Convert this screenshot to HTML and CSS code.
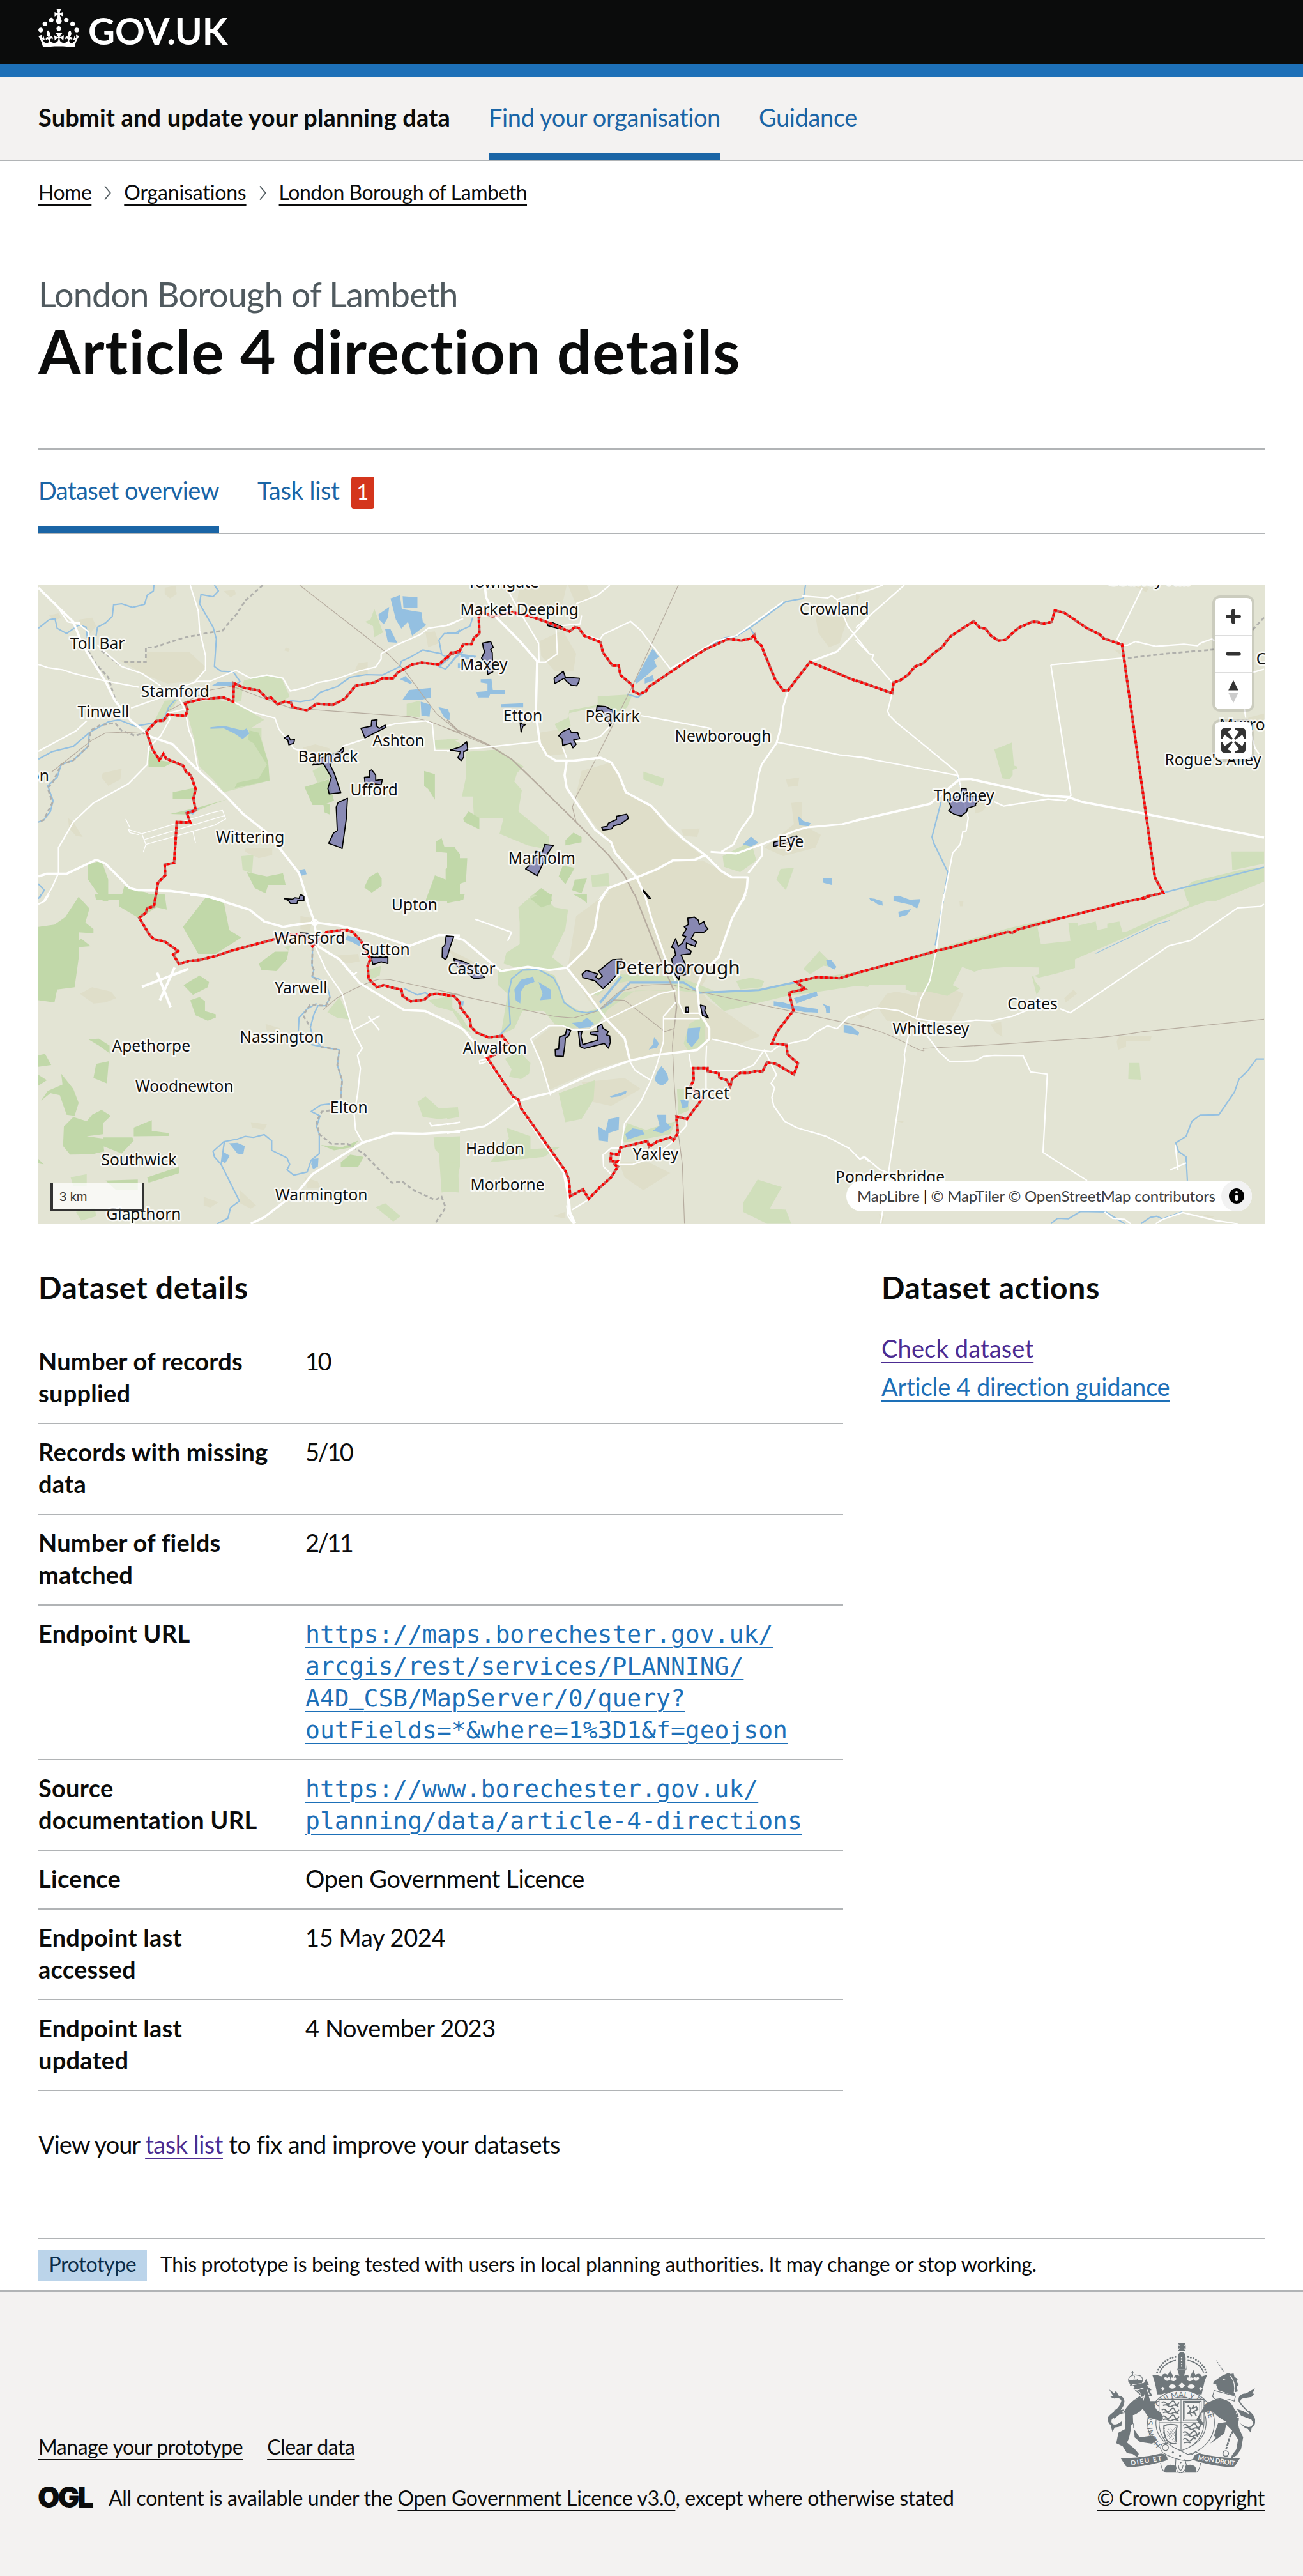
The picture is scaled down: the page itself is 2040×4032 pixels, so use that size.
FILE: index.html
```html
<!DOCTYPE html>
<html lang="en">
<head>
<meta charset="utf-8">
<title>Article 4 direction details</title>
<link rel="stylesheet" href="styles.css">
</head>
<body>
<header class="header">
  <a class="logo" href="#">
    <svg class="logo-crown" viewBox="0 0 32 30" aria-hidden="true"><path fill="currentColor" d="M22.6 10.4c-1 .4-2-.1-2.4-1-.4-.9.1-2 1-2.4.9-.4 2 .1 2.4 1s-.1 2-1 2.4m-5.9 6.7c-.9.4-2-.1-2.4-1-.4-.9.1-2 1-2.4.9-.4 2 .1 2.4 1s-.1 2-1 2.4m10.8-3.7c-1 .4-2-.1-2.4-1-.4-.9.1-2 1-2.4.9-.4 2 .1 2.4 1s0 2-1 2.4m3.3 4.8c-1 .4-2-.1-2.4-1-.4-.9.1-2 1-2.4.9-.4 2 .1 2.4 1s-.1 2-1 2.4M17 4.7l2.3 1.2V2.5l-2.3.7-.2-.2.9-3h-3.4l.9 3-.2.2c-.1.1-2.3-.7-2.3-.7v3.4L15 4.7c.1.1.1.2.2.2l-1.3 4c-.1.2-.1.4-.1.6 0 1.1.8 2 1.9 2.2h.7c1-.2 1.9-1.1 1.9-2.1 0-.2 0-.4-.1-.6l-1.3-4c-.1-.2 0-.2.1-.3m-7.6 5.7c.9.4 2-.1 2.4-1 .4-.9-.1-2-1-2.4-.9-.4-2 .1-2.4 1s0 2 1 2.4m-5 3c.9.4 2-.1 2.4-1 .4-.9-.1-2-1-2.4-.9-.4-2 .1-2.4 1s.1 2 1 2.4m-3.2 4.8c.9.4 2-.1 2.4-1 .4-.9-.1-2-1-2.4-.9-.4-2 .1-2.4 1s0 2 1 2.4m14.8 11c4.4 0 8.6.3 12.3.8 1.1-4.5 2.4-7 3.7-8.8l-2.5-.9c.2 1.3.3 1.9 0 2.7-.4-.4-.8-1.1-1.1-2.3l-1.2 4c.7-.5 1.3-.8 2-.9-1.1 2.5-2.6 3.1-3.5 3-1.1-.2-1.7-1.2-1.5-2.1.3-1.2 1.5-1.5 2.1-.1 1.1-2.3-.8-3-2-2.3 1.9-1.9 2.1-3.5.6-5.6-2.1 1.6-2.1 3.2-1.2 5.5-1.2-1.4-3.2-.6-2.5 1.6.9-1.4 2.1-.5 1.9.8-.2 1.1-1.7 2.1-3.5 1.9-2.7-.2-2.9-2.1-2.9-3.6.7-.1 1.9.5 2.9 1.9l.4-4.3c-1.1 1.1-2.1 1.4-3.2 1.4.4-1.2 2.1-3 2.1-3h-5.4s1.7 1.9 2.1 3c-1.1 0-2.1-.2-3.2-1.4l.4 4.3c1-1.4 2.2-2 2.9-1.9-.1 1.5-.2 3.4-2.9 3.6-1.9.2-3.4-.8-3.5-1.9-.2-1.3 1-2.2 1.9-.8.7-2.3-1.2-3-2.5-1.6.9-2.2.9-3.9-1.2-5.5-1.5 2-1.3 3.7.6 5.6-1.2-.7-3.1 0-2 2.3.6-1.4 1.8-1.1 2.1.1.2.9-.3 1.9-1.5 2.1-.9.2-2.4-.5-3.5-3 .6 0 1.2.3 2 .9l-1.2-4c-.3 1.1-.7 1.9-1.1 2.3-.3-.8-.2-1.4 0-2.7l-2.9.9C1.3 23 2.6 25.5 3.7 30c3.7-.5 7.9-.8 12.3-.8"/></svg>
    <span class="logo-text">GOV.UK</span>
  </a>
</header>
<nav class="service-nav">
  <span class="service-name">Submit and update your planning data</span>
  <a class="service-link is-active" href="#">Find your organisation</a>
  <a class="service-link" href="#">Guidance</a>
</nav>
<div class="container">
  <nav class="breadcrumbs">
    <a href="#">Home</a>
    <svg class="chevron" viewBox="0 0 11 22"><path d="M1 .5 9.7 11 1 21.5"/></svg>
    <a class="crumb-wide" href="#">Organisations</a>
    <svg class="chevron" viewBox="0 0 11 22"><path d="M1 .5 9.7 11 1 21.5"/></svg>
    <a href="#">London Borough of Lambeth</a>
  </nav>
  <main>
    <span class="caption">London Borough of Lambeth</span>
    <h1 class="title">Article 4 direction details</h1>
    <nav class="tabs">
      <a class="tab is-active" href="#">Dataset overview</a>
      <a class="tab" href="#"><span>Task list</span><span class="badge">1</span></a>
    </nav>

    <div class="map">
      <svg class="map-canvas" viewBox="0 0 1920 1000">
        <!-- north west -->
        <g transform="translate(0 -6) scale(.42092 .33333)">
          <path class="urban" d="M300 370 400 375 405 330 560 330 620 400 600 450 560 470 480 480 400 440zM150 180 200 170 215 210 190 250 165 220zM40 160 75 150 85 170 60 185zM470 30 510 20 515 60 490 80 470 60zM1180 410 1190 385 1225 378 1225 440 1170 440zM1440 240 1475 235 1490 290 1450 310zM920 310 935 318 930 330 915 325zM985 780 1030 765 1085 785 1080 800 990 800zM240 900 310 880 305 930 260 960 235 920zM110 1110 130 1130 165 1200 140 1195 115 1160zM770 1255 870 1250 870 1285 820 1300 770 1270zM690 45 730 40 735 60 715 75z"/>
          <path class="park" d="M555 625 550 575 660 555 725 570 800 620 840 650 790 690 830 690 830 740 855 850 860 935 690 990 650 930 600 870 580 740zM765 465 850 440 905 455 935 540 900 570 850 540 820 510 760 490zM730 490 760 500 755 560 730 570zM1250 130 1282 240 1250 262 1245 210 1215 190 1235 180zM1370 575 1420 560 1420 640 1370 630zM470 560 520 555 490 610 480 650 430 660zM1475 745 1540 740 1568 760 1568 785 1475 785zM755 1290 800 1285 795 1370 760 1355zM1020 890 1060 860 1090 920 1040 950z"/>
          <path class="wood" d="M820 710 855 850 860 935 730 970 740 945 820 925 850 860 800 760 780 745 785 700zM500 990 580 970 580 1020 500 1020zM490 1092 600 1060 705 1022 640 1050 560 1095zM410 790 450 840 500 850 470 870 410 870zM990 965 1080 930 1100 1030 1060 1050 1020 1050zM1060 1045 1085 1045 1085 1095 1065 1085zM1435 890 1475 905 1475 1025 1450 975 1435 960zM775 1365 850 1385 910 1370 920 1425 855 1425 845 1465 805 1440zM1230 1390 1262 1365 1277 1395 1277 1430 1240 1462 1212 1437zM1480 1220 1500 1205 1510 1245 1545 1245 1568 1280 1568 1500 1440 1500 1475 1380 1515 1400 1515 1350 1530 1340 1525 1275 1480 1270zM185 1330 235 1310 260 1400 260 1500 240 1500 185 1400zM320 1430 400 1460 460 1500 305 1500z"/>
          <path class="water" d="M1310 80 1345 65 1352 130 1400 140 1425 145 1430 190 1443 205 1390 255 1375 190 1350 222 1330 180zM1355 70 1410 75 1410 125 1358 125zM1265 155 1305 120 1300 170 1285 202 1268 180zM1290 225 1310 225 1335 288 1300 285zM1345 460 1365 445 1390 475 1385 482zM1380 510 1460 500 1460 545 1430 555 1355 555zM1422 565 1460 580 1455 635 1425 630zM1488 590 1525 600 1530 650 1510 640zM640 685 690 678 760 700 775 690 785 715 760 740 730 715 690 690 640 692zM645 490 670 472 725 475 740 490zM545 1080 600 1062 575 1095zM970 1355 992 1350 998 1375 978 1382z"/>
          <path class="river" d="M0 220 40 180 62 175 70 220 105 245 150 205 178 215 182 265M430 18 428 45 405 65 395 108 350 122 310 105 280 110 275 165 250 195 220 215 215 255M655 18 670 45 650 72 605 62 600 105 620 150 650 215 662 270 655 400 680 422 725 425 750 470 735 485M1568 228 1550 245 1510 245 1490 275 1500 340 1430 322 1385 355 1350 375 1345 400 1280 440 1220 438 1160 450 1110 495 1050 520 1020 555 975 565 935 560M1500 345 1530 360 1490 400 1515 412 1568 330M0 835 50 800 130 775 190 710 260 660 300 650 360 680 430 665 470 640 485 590 510 555M190 710 185 775 130 840 85 860 70 920 35 960 55 1030 45 1080 20 1120 0 1130M0 1420 22 1450 5 1485"/>
          <path class="boundary" d="M835 18 770 90 740 150 715 185 685 232 630 242 540 265 430 310 400 310 400 378 310 378M235 325 305 395M185 325 215 390 260 450 290 570 330 640 400 710 360 725 310 700 285 665 230 675 195 700 185 775 130 840 85 860 55 940 35 970 52 1040 20 1120 0 1130"/>
          <path class="rail" d="M972 18 1300 340 1360 415 1480 620 1568 712M50 895 200 745 250 712 320 708 400 715M480 610 540 570 640 510 720 492 850 555 940 595 1050 605 1380 635 1460 660 1568 712"/>
          <path class="road" d="M0 390 35 405 90 415 130 432 240 465 375 497M220 300 310 400 385 432 455 490M0 798 140 702 180 655M565 18 595 140 600 230 622 350 622 415 580 475M545 490 590 470 640 468 735 418 790 455 850 440 910 455 937 515 990 500 1040 475 1105 460 1195 420 1255 402 1275 365 1275 340 1330 300 1420 250 1450 220 1530 205 1568 180M60 100 110 190 150 200 185 235 190 300M120 190 155 195M345 595 480 535 520 540 545 600 480 620 490 645 455 725 410 780 405 860 335 950 205 1040 130 1130 75 1250 75 1370 50 1440 20 1500M545 600 560 700 575 745 590 860 600 900M725 565 800 615 880 642 895 695 935 755 950 785 985 800M1130 775 1215 740 1230 700 1330 668 1440 655 1465 668 1475 795 1568 795"/>
          <path class="road-main" d="M0 30 65 110 130 190 165 300 250 470 285 560 345 655 420 730 500 765 580 870 700 1010 760 1090 850 1180 905 1265 970 1370 1002 1500M0 1385 30 1373 105 1373 215 1307 250 1325 340 1440 370 1450 490 1453 620 1475 695 1500"/>
          <path class="runway" d="M335 1165 385 1185 650 1085 685 1075 697 1115 655 1145 400 1235 385 1185M395 1212 692 1100M335 1165 340 1180 375 1190M325 1115 340 1155M575 1175 585 1230M390 1272 400 1235"/>
        </g>
        <!-- north centre -->
        <g transform="translate(640 -6) scale(.42092 .33333)">
          <path class="urban" d="M270 18 445 18 430 100 400 170 300 160 260 100zM345 280 430 230 480 340 470 420 400 420 350 350zM345 710 440 690 440 810 370 820 345 780zM480 1000 500 890 610 850 670 990 760 1060 830 1170 950 1290 870 1310 720 1390 640 1290 560 1160 500 1060zM600 1440 870 1310 950 1310 1050 1380 1120 1400 1100 1500 600 1500zM1260 930 1310 920 1305 960 1268 965zM1280 1040 1320 1035 1320 1140 1390 1190 1370 1250 1250 1290 1180 1250 1290 1140zM1370 160 1490 170 1460 290 1420 310 1380 240zM450 18 520 18 540 80 480 110zM870 1165 940 1160 930 1200 880 1195z"/>
          <path class="park" d="M70 800 190 790 285 870 260 900 250 940 278 980 265 1080 380 1200 380 1260 300 1240 195 1185 210 1110 100 1110 95 1010 55 1010 70 920zM560 540 690 530 670 590 640 620 590 580 450 620 460 680 415 705 400 670 450 640 455 605 560 580zM730 893 808 925 800 965 730 930zM0 740 45 740 0 765zM1025 1290 1130 1220 1150 1310 1090 1365 1030 1340zM1225 1400 1240 1350 1290 1345 1260 1450zM535 1380 600 1370 605 1430 540 1435z"/>
          <path class="wood" d="M0 1245 30 1245 30 1300 75 1300 70 1410 0 1440zM440 1215 470 1180 500 1200 500 1225 440 1240zM60 1115 80 1080 120 1110 120 1165 65 1130zM415 1385 430 1335 475 1345 440 1422zM475 1400 520 1395 500 1465 465 1450zM310 1480 350 1440 385 1470 390 1500 310 1500z"/>
          <path class="water" d="M765 315 788 355 770 370 780 400 740 445 705 480 698 470 735 380zM735 455 765 440 770 465 735 480zM125 460 165 458 170 510 215 510 215 528 160 530 155 545 115 545 108 520 150 515 150 480 125 475zM50 340 110 350 95 365 50 362zM200 577 283 572 283 592 200 592zM0 600 10 620 8 650 0 650zM1100 1235 1130 1198 1158 1228 1130 1245zM1305 1100 1325 1125 1352 1135 1345 1150 1310 1145zM1397 1395 1432 1395 1430 1425 1400 1415zM40 385 60 385 60 405 40 405z"/>
          <path class="river" d="M0 240 40 245 50 230 85 210 95 170M1333 18 1325 80 1260 95 1130 215 1075 258 1030 265 890 375M1125 215 1142 250M0 405 30 360 60 330M670 530 710 545 740 515"/>
          <path class="rail" d="M860 18 690 490 555 830 480 1010 466 1060 480 1130M0 690 160 775"/>
          <path class="rail-main" d="M0 650 40 700 150 765 240 835 310 920 480 1130 600 1285 660 1380 708 1500"/>
          <path class="road" d="M605 18 560 65 480 105M230 50 260 120 340 290 342 380 365 380 410 340 405 210 495 200 500 160M570 270 580 250 682 188 720 230 830 410 890 375M0 205 60 175M720 630 830 655 980 690M1225 755 1350 785 1460 815 1568 830M0 797 150 778 340 752M445 830 430 780M430 755 515 750 570 728 605 680M510 250 570 275M1320 68 1415 78 1430 68 1450 85 1568 40M1450 85 1490 210 1568 335M830 410 1000 280 1075 255 1250 95"/>
          <path class="road-mid" d="M1568 170 1480 290 1450 330 1350 378 1268 515 1250 590 1240 690 1225 760 1170 860 1160 900 1135 1090 1090 1170 1065 1235 1020 1270M1568 1108 1470 1140 1340 1155 1300 1168 1180 1230 1075 1278 980 1270M1170 1240 1170 1290 1120 1370"/>
          <path class="road-main" d="M140 18 145 75 180 165 270 280 335 375 330 620 345 760 370 815 405 842 470 842 570 828 610 850 640 910 665 990 760 1055 820 1140 880 1210 960 1285 1020 1360 1060 1390 1118 1390 1115 1440 1100 1500M445 842 437 910 445 970 490 1055 550 1165 610 1225 625 1275 705 1390 745 1500M960 1285 920 1308 840 1310 780 1352 705 1390 600 1440 565 1500"/>
        </g>
        <!-- north east -->
        <g transform="translate(1280 -6) scale(.42092 .33333)">
          <path class="urban" d="M0 60 15 70 0 110zM1460 640 1518 620 1518 650 1450 680zM440 1045 500 1035 470 1080 445 1090zM1030 20 1090 30 1080 50zM960 320 985 320 985 345z"/>
          <path class="park" d="M515 790 580 757 588 865 600 870 600 880 583 885 583 910 570 930 545 925zM1397 1268 1518 1268 1518 1325 1400 1356zM1250 1410 1430 1355 1518 1340 1518 1410 1340 1500 1232 1500 1220 1445z"/>
          <path class="water" d="M50 1487 70 1490 90 1500 55 1500zM140 1480 165 1478 200 1495 240 1492 240 1500 140 1500z"/>
          <path class="river" d="M1143 1462 1518 1342M317 1035 283 1200 290 1230 342 1365 325 1500M380 915 388 960"/>
          <path class="boundary" d="M1518 170 1470 235M1333 320 1150 340 1000 362"/>
          <path class="road" d="M180 18 0 218M0 275 50 340 65 345 60 365 135 475M0 55 30 50 100 18M135 525 118 610 125 630 155 668 195 708 375 895 383 925 395 1000 418 1110 410 1172 398 1175 388 1235 360 1275 325 1500M0 822 383 912M1065 30 972 270 990 300 1010 300 1040 282 1115 305 1220 295 1270 302 1285 288 1325 270 1333 280M725 392 990 360M725 392 800 1005 780 1030 715 1022 550 1055 515 1035M1518 412 1475 428M1445 600 1450 640M1470 720 1485 785 1500 810"/>
          <path class="road-main" d="M0 1123 275 1045 385 930 425 928 700 1005 790 1013 840 1035 1070 1090 1300 1148 1518 1203"/>
        </g>
        <!-- south west -->
        <g transform="translate(0 484) scale(.42092 .33801)">
          <path class="urban" d="M155 460 200 430 270 450 290 480 250 500 205 505zM975 100 1020 110 1010 170 975 160zM1090 285 1190 275 1195 310 1150 320zM845 600 900 620 890 640 850 630zM790 1055 850 1065 840 1090 795 1080zM750 1370 810 1440 790 1455 750 1430zM615 1400 670 1425 640 1450 615 1440zM990 1310 1040 1330 1050 1360 1000 1360z"/>
          <path class="park" d="M1075 545 1120 475 1160 580 1110 570zM1225 350 1275 330 1270 375 1235 395zM1410 960 1440 935 1490 990 1560 985 1560 1030 1490 1040 1430 1030zM1470 1125 1568 1120 1568 1260 1550 1370 1500 1380 1490 1200 1475 1180zM1255 1448 1290 1430 1348 1490 1320 1515zM120 1310 180 1295 180 1350 130 1350zM140 1470 210 1450 215 1490 160 1510zM1450 490 1540 470 1540 540 1480 520zM915 245 940 235 930 260z"/>
          <path class="wood" d="M0 150 60 140 100 105 150 10 190 65 175 130 205 160 205 180 150 175 150 295 135 430 70 440 60 500 0 490zM95 255 160 205 195 240 140 245zM625 10 690 35 710 165 755 200 660 275 595 275 538 150zM210 0 470 0 478 70 440 60 375 110 300 55 300 25 215 25zM820 320 880 265 930 265 925 300 885 355 830 350zM540 420 600 375 635 405 630 430 575 465zM565 490 600 475 620 495 620 540 660 555 660 570 630 585 585 560zM0 745 25 738 48 790 0 798zM0 835 32 860 0 885zM215 785 262 772 255 875 205 850zM85 830 130 900 150 965 135 1025 105 1020 80 930 45 920 10 955 35 910 90 880zM130 1030 180 1050 200 1020 235 998 270 1025 240 1060 240 1110 180 1120 240 1130 245 1190 200 1203 118 1205 92 1165 95 1075zM355 1080 422 1045 422 1095 487 1105 487 1118 355 1120zM240 1125 350 1125 355 1140 310 1200 240 1165zM405 1310 525 1260 525 1290 410 1335zM250 1325 370 1320 370 1370 290 1370zM1125 1240 1160 1205 1210 1215 1190 1260 1125 1262zM1050 1160 1130 1170 1190 1140 1170 1170 1100 1185zM185 670 225 668 265 700 265 735 225 700zM0 1225 20 1250 0 1245z"/>
          <path class="water" d="M710 1152 740 1150 768 1165 762 1205 740 1200zM685 1190 712 1210 695 1245 683 1235zM1018 1225 1042 1222 1040 1260 1022 1272 1015 1250zM1150 190 1195 205 1195 240 1165 220 1140 210z"/>
          <path class="river" d="M1020 245 1018 330 1025 350 1018 380 1050 395 1075 430 1085 475 1070 515 1040 515 1025 555 1012 615 1020 660 1050 700M1035 505 1000 530 970 570 967 630M1015 695 1055 705 1120 720 1112 790 1130 860 1125 940M1085 970 1050 975 1015 1005 1048 1025 1035 1075 1045 1110 1045 1200 1015 1230 1000 1285 950 1300 925 1275 935 1250 925 1220 868 1185 868 1140 840 1112 800 1125 770 1120 740 1133 690 1145 650 1190 655 1215 680 1250 720 1350 748 1420 715 1450 705 1500 665 1525M692 1145 680 1250M1360 435 1410 465 1440 455 1450 465M0 20 10 0"/>
          <path class="boundary" d="M1020 245 1018 330 1025 350 1018 380 1040 400M1085 475 1070 515 1010 512 985 560 1012 615M1050 705 1120 720 1112 790 1130 860 1125 945M1085 1000 1055 1005 1035 1050 1045 1110 1090 1155 1150 1155 1210 1200 1315 1335 1355 1330 1390 1365 1475 1415 1500 1400 1515 1450 1475 1525"/>
          <path class="rail" d="M1058 535 1110 480 1170 440 1240 402 1270 392 1310 395 1568 465"/>
          <path class="road" d="M1030 240 1070 350 1130 460 1170 630 1205 712 1187 745 1198 805 1188 920 1175 1020 1180 1090 1205 1145M1170 630 1270 562M1228 565 1268 628M1455 1055 1462 1072 1568 1055M0 45 25 30 40 0M1145 345 1175 370 1185 360"/>
          <path class="road-main" d="M565 0 630 10 785 70 840 125 910 150 970 138 1030 130 1120 145 1230 175 1380 238 1490 188 1568 190M990 0 1025 120 1040 240 1120 300 1195 410 1360 535 1440 540 1568 615M790 1525 840 1495 970 1370 1020 1295 1205 1150 1320 1105 1430 1108 1568 1098"/>
          <path class="runway-wide" d="M385 428 558 345M442 362 492 522M507 338 452 490"/>
          <circle class="road" cx="1028" cy="130" r="12"/>
        </g>
        <!-- south centre -->
        <g transform="translate(640 484) scale(.42092 .33801)">
          <path class="urban" d="M450 330 480 100 590 0 1100 0 1060 100 1010 290 940 440 970 490 1165 655 1080 695 985 670 960 700 880 730 690 760 550 810 380 905 320 680 400 600 520 620 590 590 520 480zM640 1240 750 1240 830 1290 730 1370 660 1310zM500 870 660 850 720 900 610 980 540 960zM390 1490 440 1470 440 1500zM0 250 80 300 140 340 60 350z"/>
          <path class="park" d="M265 60 320 0 360 10 400 60 450 70 440 160 390 290 440 340 360 345 260 340 210 320 220 270 270 230 270 130zM190 345 340 345 400 375 440 500 500 545 560 530 620 500 660 450 860 440 820 400 680 400 640 410 620 400 560 470 540 460 590 440 640 370 860 380 1000 450 1170 435 1300 400 1568 350 1568 415 1330 460 1280 465 1030 540 960 460 860 445 700 445 600 530 560 600 470 620 400 600 360 540 280 540 250 620 200 650 225 460 190 420zM415 920 550 860 545 950 500 1040 440 1055zM215 760 270 730 310 780 305 830 275 855 230 845 240 810zM220 1080 310 1120 310 1180 420 1170 360 1215 160 1240 230 1130zM0 1240 40 1240 45 1380 0 1375zM1325 345 1385 262 1448 340 1400 330 1350 370zM1075 400 1130 385 1180 400 1170 430 1090 440zM900 600 940 570 960 600 960 690 900 730 880 690zM650 1130 670 1060 740 1090 850 1050 830 1110 660 1150zM855 900 890 900 900 1000 860 1020zM1100 1430 1155 1320 1245 1355 1200 1455 1260 1460 1280 1525 1190 1525 1100 1470zM0 1010 40 985 45 1030 0 1040zM0 500 50 560 90 640 60 620z"/>
          <path class="wood" d="M0 0 65 0 60 25 0 40zM310 20 340 0 390 0 385 45 350 60zM470 0 520 0 520 40 500 20z"/>
          <path class="water" d="M250 440 275 395 320 380 325 405 290 420 275 450 272 505 255 490zM340 405 385 440 385 485 345 490 355 460zM465 595 500 590 520 570 548 600 530 615 490 620zM565 498 645 378 652 384 572 505zM1215 495 1250 500 1290 515 1380 530 1378 547 1330 545 1215 515zM1290 480 1375 450 1378 470 1340 485 1300 505zM1395 505 1425 520 1425 550 1410 550 1408 525zM1475 605 1505 610 1532 640 1530 652 1475 640zM895 620 942 615 935 670 910 708 890 680zM770 660 788 690 780 710 750 718 765 695zM797 795Q825 830 823 860 797 905 773 860 773 830 797 795zM605 935 668 908 665 922 640 935 610 940zM600 1040 640 1030 638 1090 600 1105 598 1145 565 1140 562 1075 590 1095zM663 1110 690 1083 725 1090 735 1110 670 1135zM780 1020 815 1020 815 1055 835 1080 800 1105 765 1095 790 1070zM867 950 898 955 895 985 875 990zM1410 305 1430 305 1448 335 1440 348 1415 330zM50 495 62 495 60 515 52 512z"/>
          <path class="river" d="M190 660 235 600 228 460 240 390 280 350 340 348 395 385 415 430 435 500 480 540 520 548 560 538 620 480 680 408 750 408 880 408 940 455 1160 443 1300 405"/>
          <path class="river-main" d="M560 538 610 500 680 408 880 408 940 455 1160 443 1300 405"/>
          <path class="rail" d="M0 455 400 565 470 572 560 540 640 450 730 420 830 415 900 440 1568 617M560 540 620 488 660 490 810 635 845 620 855 520 845 450M845 450 852 520 838 700 845 880 855 1060 875 1250 883 1525"/>
          <path class="rail-main" d="M698 0 790 290 845 450"/>
          <path class="road" d="M105 115 240 175 225 215M530 468 580 438 640 370M595 578 740 490 790 460 850 445M310 668 380 608 430 608 470 628 530 625 595 578M310 668 350 780 385 930M860 400 862 500 880 550 945 550M803 575 940 575M850 500 805 565 805 680 780 790 757 865 720 960 660 1060 640 1250 690 1250 760 1220 830 1155 890 1070 890 1040M680 775 700 815 757 860M965 700 963 760 963 900M985 670 1080 695 1140 718 1205 728 1235 700 1340 672 1370 640 1415 608 1450 622 1490 570 1568 540M965 815 1090 815 1140 790 1180 720 1225 835 1205 875 1218 895 1208 940 1215 980 1255 1050 1300 1080 1410 1120 1495 1175 1535 1225 1550 1215 1568 1235M900 740 908 800M648 1175 610 1175 580 1205 582 1260 610 1295M530 1410 465 1460M0 1065 48 1055M445 1440 450 1490 470 1525M150 760 120 770 122 785 145 775"/>
          <path class="road-mid" d="M0 1105 140 1073 180 1040 260 960M735 0 760 110 810 290 850 400"/>
          <path class="road-main" d="M585 0 565 40 550 160 520 250 445 340 380 350 300 335 200 355 60 210 0 190M1110 0 1060 110 1010 290 950 360 930 430 940 550 975 620 975 670 930 720 850 732 770 745 680 770 540 830 385 918 310 940 260 960M445 340 520 455 590 575 660 665 680 770M0 585 60 625 150 760"/>
          <path class="motorway" d="M150 762 265 970 350 1130 435 1285 450 1380 455 1470 475 1525"/>
        </g>
        <!-- south east -->
        <g transform="translate(1280 484) scale(.42092 .33801)">
          <path class="urban" d="M80 520 115 460 150 450 225 470 230 440 350 430 400 460 380 520 350 590 230 590 115 585zM500 600 540 590 545 660 520 640zM970 680 980 655 1100 655 1095 680 1005 680 1005 705 975 720zM775 480 810 440 822 460 780 500zM0 560 75 530 20 580zM150 1050 178 1048 175 1058zM1280 1480 1335 1490 1320 1500zM85 1480 105 1490 100 1525zM385 30 400 30 398 55 387 55z"/>
          <path class="park" d="M0 365 290 255 570 155 730 110 760 115 675 150 688 230 798 215 790 130 825 130 825 145 892 125 898 165 935 155 935 135 980 125 992 175 1010 170 1100 120 1240 50 1230 0 1380 0 1240 60 1000 200 815 300 815 340 750 365 680 385 660 375 665 400 688 435 672 465 655 380 680 370 680 338 570 335 475 345 440 358 395 335 380 375 360 420 385 435 340 470 270 450 205 450 185 440 185 418 50 418 45 428 0 422zM1015 780 1055 780 1060 858 1013 855z"/>
          <path class="water" d="M50 18 98 30 100 52 80 45zM140 10 160 5 170 22 240 25 228 65 205 48 145 32zM158 80 205 68 190 95 160 105zM0 630 12 640 8 652 0 650z"/>
          <path class="river" d="M325 30 295 235M1518 762 1490 762 1455 820 1425 855 1408 915 1350 1020 1280 1022 1250 1050 1228 1120 1190 1150 1200 1190 1228 1215 1233 1325M1060 1525 1095 1495 1120 1490 1140 1502 1215 1470M725 1525 750 1500 790 1502 835 1468 930 1470 1000 1525"/>
          <path class="drain" d="M892 273 1120 138 1168 120"/>
          <path class="rail" d="M0 605Q90 625 180 685T250 713L520 695 870 665Q960 658 1070 635L1518 578"/>
          <path class="road" d="M327 0 300 250 275 400 240 485 225 570M0 553 80 525 160 538 225 575 300 590 400 590 445 582 505 585 580 565 640 535M760 530 797 548 1165 237 1245 213 1420 62 1505 55 1518 45M195 655 180 740 182 770 120 1300 92 1525M265 655 310 730 350 775 445 770 475 750 515 745 622 747 650 822 712 832 696 1195 860 1325M0 1210 15 1225 35 1217 90 1275 125 1290M1188 1160 1198 1278M1168 1276 1228 1243M925 1470 955 1500 1000 1505 1022 1525M1115 1525 1140 1505 1215 1473 1340 1510 1420 1525"/>
        </g>

        <!-- article 4 direction areas -->
        <g class="zones" transform="translate(0 -6) scale(.42092 .33333)">
          <path d="M1200 690 1238 680 1240 653 1260 650 1258 680 1268 690 1290 675 1293 685 1215 735zM915 735 930 725 938 745 953 743 950 760 932 768 928 745zM1020 862 1050 830 1120 800 1133 780 1136 795 1085 860 1102 905 1125 992 1082 998 1077 972 1090 920 1060 855zM1150 1018 1145 1120 1130 1255 1120 1248 1080 1230 1098 1182 1112 1170 1108 1060 1115 1038zM1213 920 1232 918 1232 890 1240 885 1255 910 1255 935 1280 930 1275 955 1215 945z"/>
        </g>
        <g class="zones" transform="translate(640 -6) scale(.42092 .33333)">
          <path d="M132 290 162 282 172 310 162 320 168 335 170 425 150 438 150 400 128 360 140 330 135 315zM398 455 432 422 440 450 492 455 490 472 482 490 462 488 445 470 435 455 400 480zM373 195 395 195 430 215 425 225 395 215 375 208zM558 585 590 588 615 605 620 640 605 680 595 640 575 605 555 610zM270 640 278 670 292 672 282 680 275 708 273 680zM415 725 430 705 455 692 462 710 485 708 493 738 470 745 480 765 468 782 460 760 430 770 428 740zM12 792 48 778 73 753 77 790 62 800 62 825 52 842 40 828 50 800zM363 1235 395 1240 375 1275 335 1382 292 1350 325 1310 330 1268 355 1270zM575 1155 595 1150 600 1135 630 1118 630 1103 668 1093 675 1112 645 1140 620 1148 612 1162 580 1168zM1215 1225 1245 1215 1300 1195 1305 1210 1215 1245zM730 1450 757 1488 750 1488 730 1455z"/>
        </g>
        <g class="zones" transform="translate(1280 -6) scale(.42092 .33333)">
          <path d="M392 973 410 973 415 1010 470 1010 445 1045 445 1053 415 1065 412 1082 392 1102 365 1093 345 1077 355 1060 340 1025 392 1005z"/>
        </g>
        <g class="zones" transform="translate(0 484) scale(.42092 .33801)">
          <path d="M915 20 945 22 955 15 970 18 975 0 988 8 988 28 965 28 962 42 938 42 930 28zM1517 192 1545 195 1530 250 1522 285 1515 302 1502 290 1503 245 1512 235zM1237 290 1300 290 1300 320 1275 312 1245 325zM975 178 1005 180 1010 200 980 195z"/>
        </g>
        <g class="zones" transform="translate(640 484) scale(.42092 .33801)">
          <path d="M895 110 920 105 935 120 938 140 955 125 960 145 970 160 955 175 920 178 908 205 928 220 922 240 890 225 890 250 908 262 905 275 870 280 885 320 890 370 865 375 862 395 850 375 835 300 850 280 845 250 835 245 842 225 850 205 860 240 875 225 888 195 875 190 890 160 882 150 897 140zM563 355 615 302 650 300 628 375 607 405 580 436 550 400 505 385 502 368 518 352 545 362 560 368 553 382 565 393 578 378zM418 660 440 650 445 622 460 630 452 655 440 665 438 700 432 750 403 748 402 718 415 715zM488 633 502 633 498 655 505 695 560 675 558 652 535 648 533 638 562 635 560 612 575 600 580 620 600 635 592 650 605 655 607 685 600 712 585 690 510 713 495 705zM888 522 898 522 898 545 888 545zM942 512 962 518 958 540 972 572 950 560 945 530zM25 298 60 310 95 330 140 385 100 390 85 375 30 325z"/>
        </g>

        <!-- authority boundary: muted line with brighter dashes over it -->
        <g class="authority">
          <g transform="translate(0 -6) scale(.42092 .33333)">
            <path id="b1" d="M1568 325 1530 345 1490 390 1425 382 1390 390 1335 430 1320 455 1280 455 1250 475 1180 490 1140 552 1095 580 1035 575 1000 605 975 600 945 590 940 570 915 565 890 578 865 545 850 550 820 512 765 500 727 478 725 565 690 545 610 552 545 572 555 600 548 632 482 625 465 655 440 655 402 705 425 790 450 838 465 810 475 832 538 865 550 895 567 910 585 975 577 1020 585 1075 552 1088 565 1132 515 1130 505 1322 470 1330 472 1380 445 1415 435 1490"/>
            <use href="#b1" class="dashes"/>
          </g>
          <g transform="translate(640 -6) scale(.42092 .33333)">
            <path id="b2" d="M0 360 15 335 45 332 60 295 90 295 100 265 120 245 118 170 130 145 170 165 240 145 300 160 370 190 455 235 475 215 490 220 510 255 570 285 580 335 615 395 638 395 645 440 690 488 692 515 715 530 740 515 750 495 885 380 960 320 1045 270 1095 278 1130 268 1143 252 1148 280 1168 300 1220 460 1250 512 1268 512 1350 378 1525 470"/>
            <use href="#b2" class="dashes"/>
          </g>
          <g transform="translate(1280 -6) scale(.42092 .33333)">
            <path id="b3" d="M0 465 135 525 140 475 165 465 195 438 220 400 250 385 285 342 320 310 350 260 438 187 460 217 482 222 502 255 530 278 555 275 605 218 655 190 675 190 695 200 728 190 740 137 775 147 860 220 905 248 922 268 990 297 1112 1390 1143 1462 1090 1478 1065 1492"/>
            <use href="#b3" class="dashes"/>
          </g>
          <g transform="translate(0 484) scale(.42092 .33801)">
            <path id="b4" d="M435 18 430 55 405 62 400 85 375 108 415 190 430 207 470 218 520 262 502 278 523 322 560 308 600 303 660 285 720 260 870 210 940 185 985 190 1020 240 1070 175 1110 168 1150 165 1170 175 1200 215 1235 300 1225 330 1228 390 1260 430 1285 420 1310 430 1350 440 1355 470 1385 495 1435 488 1455 465 1480 460 1520 466"/>
            <use href="#b4" class="dashes"/>
          </g>
          <g transform="translate(640 484) scale(.42092 .33801)">
            <path id="b5" d="M0 467 25 470 45 495 50 525 85 580 88 612 110 640 155 662 205 655 225 690 190 735 150 758 245 935 265 950 275 990 440 1280 453 1320 458 1398 505 1365 527 1410 565 1360 610 1310 635 1260 622 1250 632 1235 608 1235 610 1200 638 1205 645 1172 745 1142 752 1168 780 1145 830 1125 842 1138 858 1105 853 1028 892 1040 950 945 905 890 917 860 915 804 968 804 968 818 1012 828 1012 848 1040 860 1053 890 1060 855 1090 826 1120 826 1155 816 1172 822 1190 778 1222 784 1290 833 1305 782 1266 740 1262 696 1208 690 1230 630 1288 538 1272 455 1332 438 1298 405 1375 383 1460 388 1520 365"/>
            <use href="#b5" class="dashes"/>
          </g>
          <g transform="translate(1280 484) scale(.42092 .33801)">
            <path id="b6" d="M0 365 190 300 290 265 300 260 340 250 565 173 582 178 600 163 730 120 1010 32 1060 20 1090 6"/>
            <use href="#b6" class="dashes"/>
          </g>
        </g>

        <g class="labels">
          <text x="92.6" y="99.7">Toll Bar</text><text x="214.3" y="175">Stamford</text><text x="101.9" y="206.7">Tinwell</text>
          <text x="453.5" y="276.7">Barnack</text><text x="564" y="252">Ashton</text><text x="525.7" y="329">Ufford</text>
          <text x="331.7" y="403.3">Wittering</text><text x="2" y="306.7">on</text>
          <text x="727.8" y="4">Towngate</text><text x="753.2" y="47.3">Market Deeping</text><text x="697.5" y="133.3">Maxey</text>
          <text x="758.5" y="212.7">Etton</text><text x="899" y="214.3">Peakirk</text><text x="1071.9" y="244.7">Newborough</text>
          <text x="1246.2" y="45.7">Crowland</text><text x="788.4" y="435.7">Marholm</text><text x="1178.3" y="409.7">Eye</text>
          <text x="1449.2" y="338">Thorney</text><text x="1839" y="282">Rogue's Alley</text><text x="1894" y="227.3">Murrow</text>
          <text x="1948" y="124">Church</text><text x="1738" y="0">Gedney Hill</text>
          <text x="588.9" y="508.7">Upton</text><text x="424.9" y="561.4">Wansford</text><text x="543.6" y="579">Sutton</text>
          <text x="678.3" y="609.4">Castor</text><text x="411.4" y="638.5">Yarwell</text><text x="380.9" y="715.9">Nassington</text>
          <text x="176.8" y="730.4">Apethorpe</text><text x="228.8" y="793">Woodnewton</text><text x="486.2" y="826">Elton</text>
          <text x="157.4" y="907.5">Southwick</text><text x="165" y="993.4">Glapthorn</text><text x="443.2" y="963">Warmington</text>
          <text class="city" x="1000.7" y="609">Peterborough</text>
          <text x="714.9" y="732.8">Alwalton</text><text x="1046.6" y="803.7">Farcet</text><text x="714.9" y="890.6">Haddon</text>
          <text x="966.6" y="899">Yaxley</text><text x="734.5" y="946.7">Morborne</text><text x="1333.6" y="935">Pondersbridge</text>
          <text x="1556.5" y="663.8">Coates</text><text x="1397.4" y="703.4">Whittlesey</text>
        </g>
      </svg>
      <div class="map-controls">
        <div class="control-group">
          <button aria-label="Zoom in"><svg viewBox="0 0 29 29"><path d="M14.5 8.5c-.75 0-1.5.75-1.5 1.5v3h-3c-.75 0-1.5.75-1.5 1.5S9.25 16 10 16h3v3c0 .75.75 1.5 1.5 1.5S16 19.75 16 19v-3h3c.75 0 1.5-.75 1.5-1.5S19.75 13 19 13h-3v-3c0-.75-.75-1.5-1.5-1.5"/></svg></button>
          <button aria-label="Zoom out"><svg viewBox="0 0 29 29"><path d="M10 13c-.75 0-1.5.75-1.5 1.5S9.25 16 10 16h9c.75 0 1.5-.75 1.5-1.5S19.75 13 19 13z"/></svg></button>
          <button aria-label="Reset bearing"><svg viewBox="0 0 29 29"><path d="m10.5 14 4-8 4 8z"/><path class="needle-south" d="m10.5 16 4 8 4-8z"/></svg></button>
        </div>
        <div class="control-group">
          <button aria-label="Full screen"><svg viewBox="0 0 29 29"><path d="M24 16v5.5c0 1.75-.75 2.5-2.5 2.5H16v-1l3-1.5-4-5.5 1-1 5.5 4 1.5-3zM6 16l1.5 3 5.5-4 1 1-4 5.5 3 1.5v1H7.5C5.75 24 5 23.25 5 21.5V16zm7-11v1l-3 1.5 4 5.5-1 1-5.5-4L6 13H5V7.5C5 5.75 5.75 5 7.5 5zm11 2.5c0-1.75-.75-2.5-2.5-2.5H16v1l3 1.5-4 5.5 1 1 5.5-4 1.5 3h1z"/></svg></button>
        </div>
      </div>
      <div class="map-scale">3 km</div>
      <div class="map-attribution">
        <span class="credit"><span class="credit-link">MapLibre</span> | <span class="credit-link">© MapTiler</span> <span class="credit-link">© OpenStreetMap contributors</span></span>
        <svg class="credit-icon" viewBox="0 0 24 24"><circle class="credit-disc" cx="12" cy="12" r="12"/><path transform="translate(2 2)" fill-rule="evenodd" d="M4 10a6 6 0 1 0 12 0 6 6 0 1 0-12 0m5-3a1 1 0 1 0 2 0 1 1 0 1 0-2 0m0 3a1 1 0 1 1 2 0v3a1 1 0 1 1-2 0"/></svg>
      </div>
    </div>

    <div class="columns">
      <section>
        <h2 class="heading">Dataset details</h2>
        <dl class="summary">
          <div class="row"><dt>Number of records supplied</dt><dd class="count">10</dd></div>
          <div class="row"><dt>Records with missing data</dt><dd class="count">5/10</dd></div>
          <div class="row"><dt>Number of fields matched</dt><dd class="count">2/11</dd></div>
          <div class="row"><dt>Endpoint URL</dt><dd class="mono"><a href="#">https://maps.borechester.gov.uk/<br>arcgis/rest/services/PLANNING/<br>A4D<span class="raised">_</span>CSB/MapServer/0/query?<br>outFields=*&amp;where=1%3D1&amp;f=geojson</a></dd></div>
          <div class="row"><dt>Source documentation URL</dt><dd class="mono"><a href="#">https://www.borechester.gov.uk/<br>planning/data/article-4-directions</a></dd></div>
          <div class="row"><dt>Licence</dt><dd>Open Government Licence</dd></div>
          <div class="row"><dt>Endpoint last accessed</dt><dd>15 May 2024</dd></div>
          <div class="row"><dt>Endpoint last updated</dt><dd>4 November 2023</dd></div>
        </dl>
        <p class="note"><span class="note-lead">View your </span><a class="visited" href="#">task list</a> to fix and improve your datasets</p>
      </section>
      <aside>
        <h2 class="heading">Dataset actions</h2>
        <ul class="actions">
          <li><a class="visited check" href="#">Check dataset</a></li>
          <li><a href="#">Article 4 direction guidance</a></li>
        </ul>
      </aside>
    </div>
  </main>
  <div class="phase">
    <strong class="phase-tag">Prototype</strong>
    <span class="phase-text">This prototype is being tested with users in local planning authorities. It may change or stop working.</span>
  </div>
</div>
<footer class="footer">
  <div class="footer-main">
    <div class="footer-links"><a href="#">Manage your prototype</a><a href="#">Clear data</a></div>
    <div class="licence">
      <svg class="ogl" viewBox="0 0 82 34"><text x="-1" y="33.4" textLength="85" lengthAdjust="spacingAndGlyphs">OGL</text></svg>
      <span>All content is available under the <a href="#">Open Government Licence v3.0</a>, except where otherwise stated</span>
    </div>
  </div>
  <div class="crown">
    <svg class="crest" viewBox="282 80 696 612" aria-hidden="true">
      <!-- crown -->
      <path class="ink" d="M615 81h37l-9 14 9-2v15l-9-3 7 14h-33l7-14-9 3V93l9 2zM617 145c-4-30 37-30 34 0l5 60h-44zM513 230l25 8c5-14 22-18 32-4l-5 12c-4-6-12-6-14 0 2 14 18 18 28 4 0-8-9-12-13-5 0-14 4-18 8-25l4-14 6 16c6 6 10 14 8 24-4-6-12-2-12 6 8 14 28 8 28-4-2-7-8-6-10-2-2-16 14-20 24-10l-8-27h38l-8 27c10-10 26-6 24 10-2-4-8-5-10 2 0 12 20 18 28 4 0-8-8-12-12-6-2-10 2-18 8-24l6-16 4 14c4 7 8 11 8 25-4-7-13-3-13 5 10 14 26 10 28-4-2-6-10-6-14 0l-5-12c10-14 27-10 32 4l25-8-12 30-14 62h-20q-90-26-170 0h-20q-3-40-22-92z"/>
      <path class="beads" d="M518 218q24-62 90-72M749 218q-24-62-90-72"/>
      <path class="line5" d="M530 220q20-48 76-58M737 220q-20-48-76-58"/>
      <path class="gap" d="M614 160v42M652 160v42"/>
      <path class="beads light" d="M633 150v52"/>
      <g class="paper"><path d="m634 266 15 14-15 14-15-14zM545 286l8 9-8 9-8-9zM723 286l8 9-8 9-8-9z"/><ellipse cx="589" cy="285" rx="16" ry="10"/><ellipse cx="678" cy="285" rx="16" ry="10"/></g>
      <!-- garter and shield -->
      <ellipse class="line3 backed" cx="630" cy="455" rx="157" ry="152"/>
      <ellipse class="line3" cx="630" cy="455" rx="118" ry="120"/>
      <path id="garter" fill="none" d="M538 560A134 130 0 1 1 722 560"/>
      <text class="motto-small"><textPath href="#garter" startOffset="2">HONI  SOIT  QUI MAL Y PENSE</textPath></text>
      <path class="line3 backed" d="M527 345h211v110q-5 100-108 132-100-32-103-132zM630 345v240M527 455h211"/>
      <path class="line3" d="M641 354h84v92h-84zM648 361h70v78h-70z"/>
      <path class="beast" d="M540 362q10-10 20 2t22-4 20 4 18-4M545 374q15-6 25 2t20 0 28 4M540 396q10-10 20 2t22-4 20 4 18-4M545 408q15-6 25 2t20 0 28 4M540 428q10-10 20 2t22-4 20 4 18-4M545 441q15-6 25 2t20 0 28 4M640 468q10-10 20 2t22-4 20 4 22-4M645 481q15-6 25 2t20 0 28 4M640 502q10-10 20 2t22-4 20 4 14-4M645 515q15-6 25 2t20 0 20 4M640 534q10-10 20 2t22-4 16 2M645 550q15-6 30 0M662 375l14 16-6 18 12 16M690 372l-8 16 20-8 6 12-18 10 12 22M660 412l16-6 20 4"/>
      <path class="beast" d="M548 470q30-12 66-2M550 472q-2 40 14 66 18 22 44 14M612 470q-10 34-4 78M553 482l-6 4M553 500l-6 4M558 520l-6 6"/>
      <path class="line2" d="m566 480 40 44M576 476l34 38M564 494l40 44M566 510l34 36M606 476l-40 44M612 488l-40 44"/>
      <!-- belt -->
      <path class="line3 backed" d="M540 556q30-10 52 14l70 34q20 6 36-12l22 10q-30 34-64 32-60-6-112-38-18-20-4-40zM606 622l-2 34q6 34 24 36 20-2 28-36l-8-30M618 654q2 24 10 24t12-24"/>
      <circle class="line3" cx="557" cy="572" r="14"/><circle class="ink" cx="592" cy="595" r="5"/><circle class="ink" cx="626" cy="610" r="5"/><circle class="ink" cx="628" cy="642" r="4"/>
      <!-- lion -->
      <path class="ink" d="M390 282l66-14 10-18 14 26-12 4 24 22-10 2 14 26-18 0 8 24h30q14 4-10 14 0 26 30 40l10 26-10 16-30-12-26-4-30-44q-18 22-46 30l2 60 30 44 60-8 22 20-24 18-56-8-26-22-4-66-12 10q-6 60-20 80l36 30 20 24-8 14-22-14-26-4-20-32-30-14 10-50 30-16q8-60-4-84 30-50 80-74l-36-32 6-8-18-20z"/>
      <path class="ink" d="M350 470q-40 20-60-16-14-20 12-40 44-34 48-62-8-18-34-10l-18-8 14-4-20-32 26 20 6-14 14 24q34 6 24 40-4 22-50 64-16 14-4 28 14 12 44-12z"/><path class="ink" d="M312 432l6-40 16 6 30-6-12 14 10 4-20 6-26 20zM300 470l8 28 14-26z"/>
      <path class="line3" d="M387 270q-10-24 8-34t46 0q16 14 2 34M403 212v20M396 218h14M412 236l-6 34M424 250v16"/>
      <path class="ink" d="M384 258q30-10 64 0l-2 12-56 6z"/>
      <path class="cut" d="M400 296l24 6 30-10M412 300v26M440 322q-2 22 14 10M430 306l10 12M420 350l-8-24M452 352l8-30M470 300l12 26"/>
      <!-- unicorn -->
      <path class="ink" d="M783 262l38-26 30-14 12 4 14-2 4 16 16 10-6 10 10 18-10 8 6 22-14 4 2 16-20-4-60-22-10-24-14-4z"/>
      <path class="line3" d="m797 163 34 54" stroke-dasharray="6 3"/>
      <path class="cut" d="M862 236q26 30 18 80M828 252l10-2M782 276l14 2"/>
      <path class="line3 backed" d="M786 304l100 26-6 24-22-8-20 4-24-8-22 4-14-14z"/>
      <path class="ink" d="M738 380q10-20 52-34 50-8 74 18 26 30 32 80l6 36 20 44-10 56-20 28-26 16 2-14 22-30 8-46-26-40-30-30-8 40-28 22-40 28 30-32-12-4 20-60 40-6q-40-20-70-54l-50 12-4 26 16 26-14 8-20-30z"/>
      <path class="ink" d="M905 456q52 40 66 0 10-16-10-34-54-50-60-66-6-36 34-38l42-24-12 26 10-2-14 16-38 6q-16 4-14 18 6 14 56 60 24 24 8 50-12 20-40 14z"/><path class="ink" d="M976 466l-16-26-48-18-20-32 30 10 30 16-4-20 22 24zM940 480l18 22 4-24z"/>
      <path class="chain" d="M880 396q30 30 10 70l-30 54-18 60"/><circle class="line5" cx="840" cy="600" r="13"/>
      <!-- scroll -->
      <path class="ink" d="M347 622q100 0 190-22 30 2 30 30l-16 6q-90 26-164 28-16 0-22-14zM907 622q-100 0-190-22-30 2-30 30l16 6q90 26 164 28 16 0 22-14zM552 688q-4-34 30-36l24 6v30zM702 688q4-34-30-36l-24 6v30z"/>
      <path class="line3" d="M534 644q6 40 24 44h144q14-6 20-44"/>
      <text class="motto" transform="translate(396 656) rotate(-9)" textLength="146">DIEU ET</text>
      <text class="motto" transform="translate(708 630) rotate(9)" textLength="176">MON DROIT</text>
    </svg>
    <a href="#">© Crown copyright</a>
  </div>
</footer>
</body>
</html>
```
FILE: styles.css
```css
* { box-sizing: border-box; }
body {
  margin: 0;
  background: #fff;
  color: #0b0c0c;
  font-family: Lato, "Noto Sans", sans-serif;
  font-size: 38px;
  line-height: 50px;
  letter-spacing: -.4px;
}
h1, h2, p, dl, dd, ul { margin: 0; padding: 0; }
ul { list-style: none; }
a { color: #1d70b8; text-decoration-thickness: 2px; text-underline-offset: 7px; }
.visited { color: #4c2c92; }

.header { height: 120px; background: #0b0c0c; border-bottom: 20px solid #1d70b8; padding: 14px 60px 0; }
.logo { display: flex; gap: 14px; color: #fff; text-decoration: none; }
.logo-crown { width: 64px; height: 60px; }
.logo-text { font-size: 58px; font-weight: 700; line-height: 60px; letter-spacing: -.2px; margin-top: 4px; }

.service-nav { display: flex; gap: 60px; height: 132px; padding: 0 60px; background: #f3f2f1; border-bottom: 2px solid #b1b4b6; white-space: nowrap; }
.service-name, .service-link { padding: 38px 0 32px; height: 130px; }
.service-name { font-weight: 700; letter-spacing: .17px; }
.service-link { color: #1a65a6; text-decoration: none; letter-spacing: -.36px; }
.service-link.is-active { border-bottom: 10px solid #1a65a6; padding-bottom: 22px; }

.container { padding: 0 60px; }
.breadcrumbs { display: flex; padding-top: 29px; font-size: 32px; line-height: 40px; letter-spacing: -.5px; }
.breadcrumbs a { color: #0b0c0c; }
.breadcrumbs .crumb-wide { letter-spacing: -.15px; }
.chevron { width: 11px; height: 22px; margin: 10px 20px 0; fill: none; stroke: #505a5f; stroke-width: 1.8; }

.caption { display: block; margin-top: 110px; font-size: 54px; line-height: 60px; letter-spacing: -.8px; color: #505a5f; }
.title { margin-top: 8px; font-size: 96px; line-height: 100px; font-weight: 700; letter-spacing: 1.1px; }
.tabs { display: flex; gap: 60px; margin-top: 103px; height: 134px; border: solid #b1b4b6; border-width: 2px 0; letter-spacing: -.55px; }
.tab { display: flex; padding-top: 38px; color: #1a65a6; text-decoration: none; }
.tab + .tab { letter-spacing: -.2px; }
.tab.is-active { border-bottom: 10px solid #1a65a6; }
.badge { margin: 4px 0 0 18px; width: 36px; height: 50px; border-radius: 4px; background: #d4351c; color: #fff; font-size: 32px; line-height: 47px; text-align: center; }

.map { position: relative; height: 1000px; margin-top: 80px; background: #e3e4d4; overflow: hidden; }
.map-canvas { display: block; width: 1920px; height: 1000px; }
.map-canvas path, .map-canvas circle { vector-effect: non-scaling-stroke; }
.urban { fill: #dfdec9; }
.park { fill: #d0dfbb; }
.wood { fill: #c1d8a9; }
.water { fill: #94c0e1; }
.river, .river-main, .drain { fill: none; stroke: #94c0e1; stroke-width: 2.2; stroke-linejoin: round; }
.river-main { stroke-width: 3.2; }
.drain { stroke-width: 1.2; }
.boundary { fill: none; stroke: #b0b0ac; stroke-width: 2.8; stroke-dasharray: 6 4; }
.rail, .rail-main { fill: none; stroke: #b6ac9f; stroke-width: 1.2; stroke-linejoin: round; }
.rail-main { stroke-width: 2.2; }
.road, .road-mid, .road-main, .motorway, .runway, .runway-wide { fill: none; stroke: #fff; stroke-width: 2.2; stroke-linejoin: round; }
.road-mid { stroke-width: 3; }
.road-main { stroke-width: 3.6; }
.motorway { stroke-width: 5; }
.runway { stroke-width: 1.3; }
.runway-wide { stroke-width: 4; }
.zones path { fill: #6766a8; fill-opacity: .72; stroke: #000; stroke-width: 1.8; stroke-linejoin: round; }
.authority { --line: #c0605d; --dash: none; }
.authority path { fill: none; stroke: var(--line); stroke-dasharray: var(--dash); stroke-width: 4; stroke-linejoin: miter; }
.authority .dashes { --line: #f00; --dash: 4 4; }
.labels text { font: 24.5px "Noto Sans", sans-serif; letter-spacing: 0; text-anchor: middle; fill: #111; stroke: rgba(255, 255, 255, .78); stroke-width: 5px; stroke-linejoin: round; paint-order: stroke; }
.labels .city { font-size: 29.8px; }

.map-controls { position: absolute; top: 20px; right: 20px; display: flex; flex-direction: column; gap: 20px; }
.control-group { display: flex; flex-direction: column; width: 58px; border-radius: 8px; background: #fff; box-shadow: 0 0 0 4px rgba(0, 0, 0, .1); }
.control-group button { height: 58px; padding: 0; border: 0; background: none; }
.control-group button + button { border-top: 2px solid #ddd; }
.control-group svg { display: block; width: 58px; height: 58px; fill: #333; }
.control-group button + button svg { margin-top: -1px; height: 57px; }
.control-group .needle-south { fill: #ccc; }
.map-scale { position: absolute; left: 19px; bottom: 20px; width: 147px; height: 44px; padding: 8px 10px; border: 4px solid #333; border-top: 0; background: rgba(255, 255, 255, .75); color: #333; font: 20px/26px "Liberation Sans", sans-serif; letter-spacing: 0; }
.map-attribution { position: absolute; right: 20px; bottom: 20px; display: flex; justify-content: space-between; width: 635px; height: 48px; padding-left: 17px; border-radius: 24px; background: #fff; font-size: 24px; line-height: 48px; letter-spacing: -.2px; white-space: nowrap; }
.credit-link { color: #404040; }
.credit-icon { width: 48px; height: 48px; }
.credit-disc { fill: #f2f2f2; }

.columns { display: grid; grid-template-columns: 1260px 540px; gap: 60px; margin-top: 69px; }
.heading { font-size: 48px; line-height: 60px; font-weight: 700; letter-spacing: .7px; }
.summary { margin-top: 42px; }
.row { display: grid; grid-template-columns: 368px 842px; gap: 50px; padding: 18px 0 22px; border-bottom: 2px solid #b1b4b6; }
.row dt { font-weight: 700; letter-spacing: .25px; }
.row .count { letter-spacing: -2.5px; }
.row .mono { margin-bottom: -2px; padding-top: 2px; font-family: "DejaVu Sans Mono", monospace; letter-spacing: 0; }
.raised { vertical-align: 4px; line-height: 0; }
.note { margin-top: 58px; letter-spacing: -.48px; }
.note-lead { letter-spacing: -1px; }
.actions { margin-top: 40px; display: grid; gap: 10px; letter-spacing: -.2px; }
.check { letter-spacing: .15px; }

.phase { display: flex; gap: 21px; margin-top: 122px; padding: 16px 0 14px; border-top: 2px solid #b1b4b6; font-size: 32px; line-height: 46px; letter-spacing: -.33px; white-space: nowrap; }
.phase-tag { width: 170px; height: 50px; background: #bbd4ea; color: #0c2d4a; font-weight: 400; text-align: center; }

.footer { display: flex; justify-content: space-between; align-items: flex-end; height: 447px; padding: 80px 60px 102px; background: #f3f2f1; border-top: 2px solid #b1b4b6; font-size: 32px; line-height: 40px; letter-spacing: -.34px; }
.footer a { color: #0b0c0c; }
.footer-links { display: flex; gap: 38px; letter-spacing: -.45px; }
.licence { display: flex; margin-top: 40px; }
.ogl { width: 82px; height: 34px; margin: 2px 28px 0 0; overflow: visible; }
.ogl text { font: 900 46px Inter, sans-serif; letter-spacing: -3px; fill: #0b0c0c; }
.crown { display: flex; flex-direction: column; }
.crest { width: 232px; height: 204px; margin: 0 14px 19px 16px; }
.ink { fill: #6f777b; }
.paper { fill: #f3f2f1; }
.line2, .line3, .line5, .beast { fill: none; stroke: #6f777b; stroke-width: 2; }
.line3 { stroke-width: 3.5; }
.line5 { stroke-width: 5; }
.beast { stroke-width: 6; }
.backed { fill: #f3f2f1; }
.beads { fill: none; stroke: #6f777b; stroke-width: 9; stroke-linecap: round; stroke-dasharray: 0 13; }
.light, .gap { stroke: #f3f2f1; }
.light { stroke-width: 7; }
.gap { stroke-width: 3; }
.cut { fill: none; stroke: #f3f2f1; stroke-width: 4; }
.chain { fill: none; stroke: #6f777b; stroke-width: 8; stroke-dasharray: 16 5; }
.motto { font: 700 31px Lato, sans-serif; letter-spacing: 0; fill: #f3f2f1; }
.motto-small { font: 36px Lato, sans-serif; letter-spacing: 0; fill: #6f777b; }
```
